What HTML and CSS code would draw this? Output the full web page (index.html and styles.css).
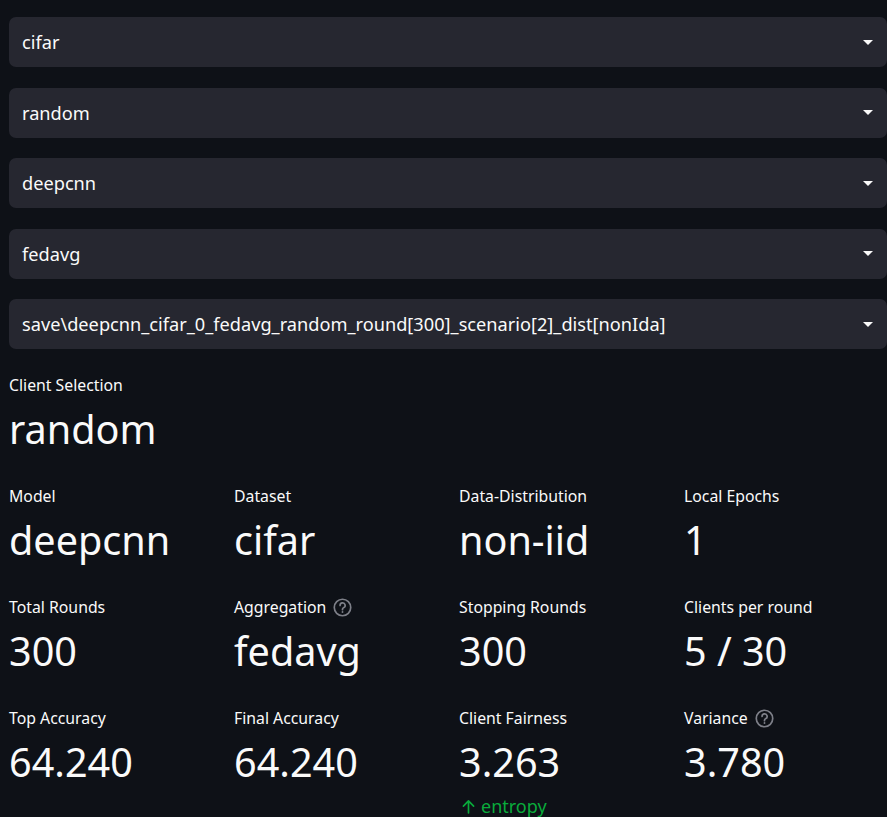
FILE: index.html
```html
<!DOCTYPE html>
<html>
<head>
<meta charset="utf-8">
<link rel="stylesheet" href="styles.css">
</head>
<body>
<main class="page">
  <div class="selects">
    <div class="select"><span class="select-text">cifar</span><svg class="caret" viewBox="0 0 10 5"><path d="M0 0h10l-5 5z"/></svg></div>
    <div class="select"><span class="select-text">random</span><svg class="caret" viewBox="0 0 10 5"><path d="M0 0h10l-5 5z"/></svg></div>
    <div class="select"><span class="select-text">deepcnn</span><svg class="caret" viewBox="0 0 10 5"><path d="M0 0h10l-5 5z"/></svg></div>
    <div class="select"><span class="select-text">fedavg</span><svg class="caret" viewBox="0 0 10 5"><path d="M0 0h10l-5 5z"/></svg></div>
    <div class="select"><span class="select-text">save\deepcnn_cifar_0_fedavg_random_round[300]_scenario[2]_dist[nonIda]</span><svg class="caret" viewBox="0 0 10 5"><path d="M0 0h10l-5 5z"/></svg></div>
  </div>

  <div class="metric single">
    <div class="label">Client Selection</div>
    <div class="value">random</div>
  </div>

  <div class="grid">
    <div class="metric"><div class="label">Model</div><div class="value">deepcnn</div></div>
    <div class="metric"><div class="label">Dataset</div><div class="value">cifar</div></div>
    <div class="metric"><div class="label">Data-Distribution</div><div class="value">non-iid</div></div>
    <div class="metric"><div class="label">Local Epochs</div><div class="value">1</div></div>

    <div class="metric"><div class="label">Total Rounds</div><div class="value">300</div></div>
    <div class="metric"><div class="label">Aggregation <svg class="help" viewBox="0 0 18 18"><circle cx="9" cy="9" r="7.8"/><path d="M6.7 7a2.4 2.4 0 1 1 3.3 2.2c-.6.3-1 .8-1 1.5v.4"/><circle class="dot" cx="9" cy="13.2" r="0.9"/></svg></div><div class="value">fedavg</div></div>
    <div class="metric"><div class="label">Stopping Rounds</div><div class="value">300</div></div>
    <div class="metric"><div class="label">Clients per round</div><div class="value">5 / 30</div></div>

    <div class="metric"><div class="label">Top Accuracy</div><div class="value">64.240</div></div>
    <div class="metric"><div class="label">Final Accuracy</div><div class="value">64.240</div></div>
    <div class="metric"><div class="label">Client Fairness</div><div class="value">3.263</div>
      <div class="delta"><svg class="arrow" viewBox="0 0 14 16"><path d="M7 15V2M1.5 7.5L7 2l5.5 5.5"/></svg>entropy</div></div>
    <div class="metric"><div class="label">Variance <svg class="help" viewBox="0 0 18 18"><circle cx="9" cy="9" r="7.8"/><path d="M6.7 7a2.4 2.4 0 1 1 3.3 2.2c-.6.3-1 .8-1 1.5v.4"/><circle class="dot" cx="9" cy="13.2" r="0.9"/></svg></div><div class="value">3.780</div></div>
  </div>
</main>
</body>
</html>
```

FILE: styles.css
```css
html, body {
  margin: 0;
  padding: 0;
  overflow: hidden;
  background: #0e1117;
}
body {
  color: #fafafa;
  font-family: "Noto Sans", "Open Sans", sans-serif;
}
.page {
  padding: 17px 0 0 9px;
  width: 878px;
}
.selects {
  display: flex;
  flex-direction: column;
  gap: 20.5px;
}
.select {
  height: 50px;
  background: #262730;
  border-radius: 7px;
  display: flex;
  align-items: center;
  justify-content: space-between;
  padding: 0 14px 0 13px;
  font-size: 18.2px;
}
.select-text {
  white-space: nowrap;
}
.caret {
  width: 10px;
  height: 5px;
  fill: #fafafa;
}
.metric.single {
  margin-top: 24px;
}
.grid {
  margin-top: 23px;
  display: grid;
  grid-template-columns: repeat(4, 209px);
  column-gap: 16px;
  row-gap: 23px;
  align-items: start;
}
.label {
  height: 24px;
  line-height: 24px;
  font-size: 15.8px;
  display: flex;
  align-items: center;
  gap: 7px;
  white-space: nowrap;
}
.value {
  height: 64px;
  line-height: 64px;
  font-size: 39.6px;
  white-space: nowrap;
}
.help {
  width: 19px;
  height: 19px;
  fill: none;
  stroke: #7d7f88;
  stroke-width: 1.6;
  stroke-linecap: round;
}
.help .dot {
  fill: #7d7f88;
  stroke: none;
}
.delta {
  height: 24px;
  line-height: 24px;
  font-size: 18px;
  color: #09ab3b;
  display: flex;
  align-items: center;
  gap: 6px;
  padding-left: 3px;
}
.arrow {
  width: 13px;
  height: 15px;
  fill: none;
  stroke: #09ab3b;
  stroke-width: 1.8;
  stroke-linecap: round;
  stroke-linejoin: round;
}
```
